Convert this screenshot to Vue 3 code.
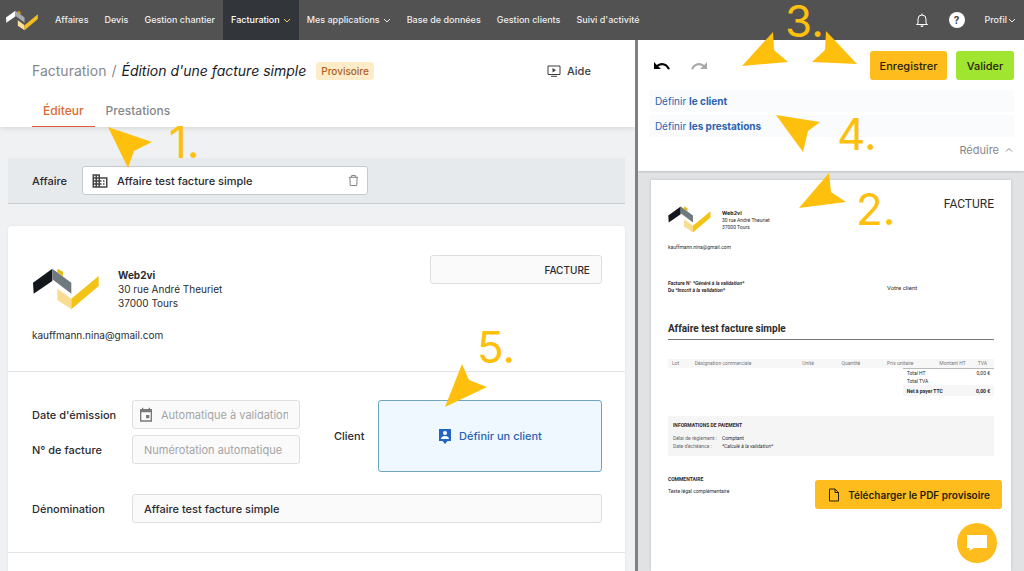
<script setup>
import { ref } from 'vue'

const menu = [
  { label: 'Affaires' },
  { label: 'Devis' },
  { label: 'Gestion chantier' },
  { label: 'Facturation', chevron: true, active: true },
  { label: 'Mes applications', chevron: true },
  { label: 'Base de données' },
  { label: 'Gestion clients' },
  { label: "Suivi d'activité" },
]

const project = ref('Affaire test facture simple')
const docType = ref('FACTURE')
const title = ref('Affaire test facture simple')

const columns = ['Lot', 'Désignation commerciale', 'Unité', 'Quantité', 'Prix unitaire', 'Montant HT', 'TVA']

const arrows = [
  '108,127 152,142 134,151 128,168',
  '742,66 773,32 774,50 788,62',
  '857,64 826,31 825,50 812,62',
  '776,115 820,122 808,131 803,152',
  '799,208 829,173 831,192 846,202',
  '445,407 462,364 469,380 487,387',
]
const steps = [
  { n: '1.', x: 169, y: 158 },
  { n: '3.', x: 785, y: 37 },
  { n: '4.', x: 837, y: 150 },
  { n: '2.', x: 856, y: 225 },
  { n: '5.', x: 477, y: 363 },
]
</script>

<template>
  <div class="app">
    <nav class="nav">
      <svg class="nav-logo" viewBox="0 0 198 126" aria-hidden="true">
        <path fill="#d9a400" d="M73 2l17 9v14L73 13z" />
        <path fill="#ffffff" d="M0 44L58 2v37L2 77z" />
        <path fill="#a7a9a8" d="M58 2l57 42v33L58 34z" />
        <path fill="#fbe0a0" d="M73 62l42 30v32L73 96z" />
        <path fill="#f5bd1f" d="M115 92l82-68v30l-82 70z" />
      </svg>
      <div class="menu">
        <a v-for="m in menu" :key="m.label" href="#" :class="{ active: m.active }">
          {{ m.label }}
          <svg v-if="m.chevron" class="chev" viewBox="0 0 8 8"><path d="M1 3l3 3 3-3" /></svg>
        </a>
      </div>
      <div class="tools">
        <button class="plain" aria-label="Notifications">
          <svg class="bell" viewBox="0 0 14 16"><path d="M3 11.500V7a4 4 0 0 1 8 0v4.500l1.500 1h-11zM7 3V1.500" /><path class="fill" d="M5.500 13.500h3a1.500 1.500 0 0 1-3 0z" /></svg>
        </button>
        <button class="help" aria-label="Aide en ligne">?</button>
        <a href="#" class="profile">Profil <svg class="chev" viewBox="0 0 8 8"><path d="M1 3l3 3 3-3" /></svg></a>
      </div>
    </nav>

    <main class="body">
      <section class="editor">
        <header class="head">
          <div class="crumbs">
            <a href="#">Facturation</a><span class="slash">/</span>
            <h1>Édition d'une facture simple</h1>
            <span class="badge">Provisoire</span>
            <a href="#" class="aide">
              <svg viewBox="0 0 14 12"><path class="line" d="M1 1h12v8.500H1zM4 11.300h6" /><path d="M5.500 3v4.500L9 5.250z" /></svg>
              Aide
            </a>
          </div>
          <div class="tabs">
            <a href="#" class="on">Éditeur</a>
            <a href="#">Prestations</a>
          </div>
        </header>

        <div class="content">
          <div class="project">
            <label for="project">Affaire</label>
            <div class="field project-field">
              <svg class="building" viewBox="0 0 24 24"><path d="M12 7V3H2v18h20V7H12zM6 19H4v-2h2v2zm0-4H4v-2h2v2zm0-4H4V9h2v2zm0-4H4V5h2v2zm4 12H8v-2h2v2zm0-4H8v-2h2v2zm0-4H8V9h2v2zm0-4H8V5h2v2zm10 12h-8v-2h2v-2h-2v-2h2v-2h-2V9h8v10zm-2-8h-2v2h2v-2zm0 4h-2v2h2v-2z" /></svg>
              <input id="project" v-model="project" type="text" />
              <button class="plain" aria-label="Supprimer l'affaire">
                <svg class="trash" viewBox="0 0 12 14"><path d="M1 3.500h10M4 3.500V1.500h4v2M2 3.500l.5 9h7l.5-9" /></svg>
              </button>
            </div>
          </div>

          <div class="card">
            <div class="issuer">
              <div class="issuer-info">
                <svg class="logo" viewBox="0 0 198 126" aria-hidden="true">
                  <path fill="#e5bd12" d="M73 2l17 9v14L73 13z" />
                  <path fill="#14171b" d="M0 44L58 2v37L2 77z" />
                  <path fill="#6e7a80" d="M58 2l57 42v33L58 34z" />
                  <path fill="#f8dc92" d="M73 62l42 30v32L73 96z" />
                  <path fill="#f3c316" d="M115 92l82-68v30l-82 70z" />
                </svg>
                <address><b>Web2vi</b><br />30 rue André Theuriet<br />37000 Tours</address>
                <p class="mail">kauffmann.nina@gmail.com</p>
              </div>
              <input v-model="docType" class="field doc-type" type="text" aria-label="Type de document" />
            </div>

            <div class="details">
              <div class="rows">
                <label for="date">Date d'émission</label>
                <div class="field soft date">
                  <svg viewBox="0 0 24 24"><path d="M17 12h-5v5h5v-5zM16 1v2H8V1H6v2H3v19h18V3h-3V1h-2zm3 19H5V8h14v12z" /></svg>
                  <input id="date" type="text" placeholder="Automatique à validation" />
                </div>
                <label for="number">N° de facture</label>
                <input id="number" class="field soft" type="text" placeholder="Numérotation automatique" />
              </div>
              <div class="client">
                <span id="client-label">Client</span>
                <button class="client-box" aria-describedby="client-label">
                  <svg viewBox="0 0 14 15"><path d="M1 0h12v12H9.500L7 15l-2.500-3H1z" /><circle cx="7" cy="4" r="2" fill="#fff" /><path fill="#fff" d="M3 10c0-4 8-4 8 0z" /></svg>
                  Définir un client
                </button>
              </div>
              <label for="title">Dénomination</label>
              <input id="title" v-model="title" class="field soft" type="text" />
            </div>
            <div class="next"></div>
          </div>
        </div>
      </section>

      <section class="preview">
        <header class="actions">
          <div class="bar">
            <button class="plain" aria-label="Annuler"><svg class="undo" viewBox="0 0 16 10"><path d="M0 1v7h7L4.300 5.500C7.500 3 12 4 14 8.500l2-.6C13.500 1.500 7 .2 2.800 4z" /></svg></button>
            <button class="plain redo" aria-label="Rétablir"><svg class="undo" viewBox="0 0 16 10"><path d="M16 1v7H9l2.700-2.500C8.500 3 4 4 2 8.500l-2-.6C2.500 1.500 9 .2 13.200 4z" /></svg></button>
            <button class="btn save">Enregistrer</button>
            <button class="btn ok">Valider</button>
          </div>
          <div class="todo">
            <a href="#">Définir <b>le client</b></a>
            <a href="#">Définir <b>les prestations</b></a>
          </div>
          <button class="plain reduce">Réduire <svg class="chev" viewBox="0 0 8 8"><path d="M1 5.500l3-3 3 3" /></svg></button>
        </header>

        <div class="stage">
          <article class="sheet">
            <div class="sheet-head">
              <svg class="sheet-logo" viewBox="0 0 198 126" aria-hidden="true">
                <path fill="#e5bd12" d="M73 2l17 9v14L73 13z" />
                <path fill="#14171b" d="M0 44L58 2v37L2 77z" />
                <path fill="#6e7a80" d="M58 2l57 42v33L58 34z" />
                <path fill="#f8dc92" d="M73 62l42 30v32L73 96z" />
                <path fill="#f3c316" d="M115 92l82-68v30l-82 70z" />
              </svg>
              <address><b>Web2vi</b><br />30 rue André Theuriet<br />37000 Tours</address>
              <strong>FACTURE</strong>
            </div>
            <p class="sheet-mail">kauffmann.nina@gmail.com</p>
            <div class="refs">
              <p>Facture N° <i>*Généré à la validation*</i><br />Du <i>*Inscrit à la validation*</i></p>
              <span>Votre client</span>
            </div>
            <h2>Affaire test facture simple</h2>
            <table class="lines">
              <thead><tr><th v-for="c in columns" :key="c">{{ c }}</th></tr></thead>
            </table>
            <table class="totals">
              <tbody>
                <tr><td>Total HT</td><td>0,00 €</td></tr>
                <tr><td>Total TVA</td><td></td></tr>
                <tr class="net"><td>Net à payer TTC</td><td>0,00 €</td></tr>
              </tbody>
            </table>
            <div class="payment">
              <h3>INFORMATIONS DE PAIEMENT</h3>
              <dl>
                <dt>Délai de règlement :</dt><dd>Comptant</dd>
                <dt>Date d'échéance :</dt><dd><i>*Calculé à la validation*</i></dd>
              </dl>
            </div>
            <h3>COMMENTAIRE</h3>
            <p class="legal">Texte légal complémentaire</p>
          </article>
        </div>

        <div class="floating">
          <button class="btn pdf">
            <svg viewBox="0 0 12 14"><path d="M1.500 1h5.500L10.500 4.500V13h-9zM7 1v3.500h3.500" /></svg>
            Télécharger le PDF provisoire
          </button>
          <button class="chat" aria-label="Discussion">
            <svg viewBox="0 0 22 18"><path d="M1 1h20v13H8l-5 3 1-3H1z" /></svg>
          </button>
        </div>
      </section>
    </main>

    <svg class="notes">
      <polygon v-for="a in arrows" :key="a" :points="a" />
      <text v-for="s in steps" :key="s.n" :x="s.x" :y="s.y">{{ s.n }}</text>
    </svg>
  </div>
</template>

<style>
body {
  margin: 0;
}
</style>

<style scoped>
* {
  box-sizing: border-box;
}
.app {
  position: relative;
  display: flex;
  flex-direction: column;
  height: 100vh;
  overflow: hidden;
  font-family: Inter, "Open Sans", sans-serif;
  font-size: 10px;
  line-height: 14px;
  color: #2b2b2e;
}
a {
  color: inherit;
  text-decoration: none;
}
button,
input {
  font: inherit;
  color: inherit;
}
button {
  cursor: pointer;
}
h1, h2, h3, p, dl, dd {
  margin: 0;
}
address {
  font-style: normal;
}
svg {
  flex: none;
}
.plain {
  display: flex;
  align-items: center;
  padding: 0;
  border: 0;
  background: none;
}
.chev {
  width: 8px;
  height: 8px;
  fill: none;
  stroke: currentColor;
}

.nav {
  display: flex;
  flex: none;
  height: 40px;
  padding: 0 8px 0 6px;
  align-items: center;
  background: #525252;
  color: #ececec;
  font-size: 9px;
  font-weight: 500;
}
.nav-logo {
  width: 32px;
  height: 21px;
}
.menu {
  display: flex;
  align-self: stretch;
  margin-left: 9px;
}
.menu a {
  display: flex;
  align-items: center;
  gap: 3px;
  padding: 0 8px;
}
.menu .active {
  background: #323539;
  color: #fff;
}
.active .chev {
  color: #f0d050;
}
.tools {
  display: flex;
  align-items: center;
  gap: 20px;
  margin-left: auto;
}
.bell {
  width: 14px;
  height: 16px;
  fill: none;
  stroke: #fff;
}
.bell .fill {
  fill: #fff;
  stroke: none;
}
.help {
  width: 16px;
  height: 16px;
  padding: 0;
  border: 0;
  border-radius: 50%;
  background: #fff;
  color: #444;
  font-size: 10px;
  font-weight: 700;
}
.profile {
  display: flex;
  align-items: center;
  gap: 1px;
}

.body {
  display: grid;
  flex: 1;
  min-height: 0;
  grid-template-columns: minmax(0, 1fr) 38%;
}
.editor {
  display: flex;
  flex-direction: column;
  overflow: hidden;
  background: #eff1f3;
}
.head {
  flex: none;
  padding: 19px 44px 0 32px;
  background: #fff;
  box-shadow: 0 1px 6px rgba(0, 0, 0, 0.12);
}
.crumbs {
  display: flex;
  align-items: center;
  height: 23px;
  font-size: 14px;
  color: #85888b;
}
.slash {
  margin: 0 5px;
}
h1 {
  font-size: 14px;
  font-weight: 400;
  font-style: italic;
  color: #1c1c1e;
}
.badge {
  margin-left: 10px;
  padding: 1px 5px;
  border-radius: 3px;
  background: #feecc9;
  color: #aa6426;
  font-size: 10px;
  line-height: 16px;
  font-weight: 500;
}
.aide {
  display: flex;
  align-items: center;
  gap: 6px;
  margin-left: auto;
  font-size: 11px;
  font-weight: 500;
  color: #3c3c40;
}
.aide svg {
  width: 14px;
  height: 12px;
  fill: #3c3c40;
}
.aide .line {
  fill: none;
  stroke: #3c3c40;
}
.tabs {
  display: flex;
  margin-top: 14px;
  font-size: 12px;
  font-weight: 500;
  line-height: 30px;
  color: #85888b;
}
.tabs a {
  padding: 0 11px;
  border-bottom: 1px solid transparent;
}
.tabs .on {
  border-color: #e05a3c;
  color: #dc6a2f;
}
.content {
  flex: 1;
  padding: 31px 10px 0 8px;
}
.project {
  display: flex;
  align-items: center;
  height: 46px;
  padding: 0 24px;
  border-bottom: 1px solid #c9ccd0;
  background: #e7eaed;
}
label,
.client {
  font-size: 11px;
  font-weight: 500;
}
.project label {
  width: 50px;
}
.field {
  min-width: 0;
  height: 29px;
  border: 1px solid #dcdee0;
  border-radius: 3px;
  background: #fafafb;
  font-size: 11px;
  font-weight: 500;
}
.field input {
  flex: 1;
  min-width: 0;
  padding: 0;
  border: 0;
  background: none;
  outline: 0;
}
.project-field {
  display: flex;
  align-items: center;
  width: 286px;
  padding: 0 8px;
  gap: 8px;
  border-color: #c6c9d2;
  background: #fff;
}
.building {
  width: 18px;
  height: 18px;
  fill: #444;
}
.trash {
  width: 11px;
  height: 13px;
  fill: none;
  stroke: #777;
}
.card {
  margin-top: 22px;
  border-radius: 4px 4px 0 0;
  background: #fff;
  box-shadow: 0 0 3px rgba(0, 0, 0, 0.06);
}
.issuer {
  display: flex;
  justify-content: space-between;
  align-items: flex-start;
  height: 146px;
  padding: 29px 23px 0 24px;
  border-bottom: 1px solid #e2e3e5;
}
.issuer-info {
  display: grid;
  grid-template-columns: 86px auto;
  padding-top: 13px;
}
.logo {
  width: 66px;
  height: 42px;
  margin-left: 1px;
}
.mail {
  grid-column: 1 / 3;
  margin-top: 18px;
}
.doc-type {
  width: 172px;
  padding: 0 11px;
  font-size: 10px;
  text-align: right;
}
.details {
  display: grid;
  grid-template-columns: 100px minmax(0, 168px) 1fr;
  row-gap: 22px;
  align-items: center;
  height: 181px;
  padding: 28px 23px 0 24px;
  align-content: start;
  border-bottom: 1px solid #e2e3e5;
}
.rows {
  display: grid;
  grid-column: 1 / 3;
  grid-template-columns: 100px 1fr;
  gap: 6px 0;
  align-items: center;
  align-self: start;
}
.soft {
  padding: 0 11px;
}
.details > .soft {
  grid-column: 2 / 4;
}
.date {
  display: flex;
  align-items: center;
  gap: 7px;
  padding-left: 5px;
}
.date svg {
  width: 16px;
  height: 16px;
  fill: #77797b;
}
::placeholder {
  color: #a3a4a6;
  opacity: 1;
  font-weight: 400;
}
.client {
  display: flex;
  align-items: center;
  padding-left: 34px;
}
.client span {
  width: 44px;
}
.client-box {
  display: flex;
  flex: 1;
  align-items: center;
  justify-content: center;
  gap: 7px;
  height: 72px;
  border: 1px solid #6fa5c4;
  border-radius: 3px;
  background: #f0f8ff;
  color: #2863b5;
}
.client-box svg {
  width: 14px;
  height: 15px;
  fill: #2065c4;
}
.next {
  height: 60px;
}

.preview {
  position: relative;
  display: flex;
  flex-direction: column;
  overflow: hidden;
  border-left: 3px solid #7e8284;
  background: #e0e2e4;
}
.actions {
  flex: none;
  height: 131px;
  padding: 11px 10px 0 11px;
  background: #fff;
  box-shadow: 0 1px 2px rgba(0, 0, 0, 0.16);
}
.bar {
  display: flex;
  align-items: center;
  padding-left: 5px;
}
.undo {
  width: 16px;
  height: 10px;
}
.redo {
  margin-left: 21px;
  fill: #a8a8a8;
}
.btn {
  height: 29px;
  border: 0;
  border-radius: 3px;
  background: #febd1c;
  color: #29210f;
  font-size: 11px;
  font-weight: 500;
}
.save {
  width: 77px;
  padding: 0;
  margin-left: auto;
}
.ok {
  width: 58px;
  padding: 0;
  margin-left: 9px;
  background: #a0e52f;
}
.todo {
  display: grid;
  gap: 3px;
  margin-top: 10px;
}
.todo a {
  padding-left: 6px;
  background: #f9fbfd;
  color: #2c62b0;
  line-height: 22px;
}
.todo b {
  font-weight: 700;
}
.reduce {
  gap: 6px;
  margin: 6px 1px 0 auto;
  color: #85888b;
  font-size: 11px;
}
.stage {
  flex: 1;
  min-height: 0;
  padding: 9px 13px 0;
}
.sheet {
  height: 100%;
  padding: 17px;
  background: #fff;
  box-shadow: 0 0 3px rgba(0, 0, 0, 0.15);
  font-family: Roboto, sans-serif;
  font-size: 5px;
  line-height: 7px;
}
.sheet-head {
  display: flex;
}
.sheet-logo {
  width: 43px;
  height: 27px;
  margin: 9px 11px 0 0;
}
.sheet-head address {
  padding-top: 12px;
}
.sheet-head b {
  font-size: 6px;
}
.sheet-head strong {
  margin-left: auto;
  font-size: 12px;
  line-height: 14px;
  font-weight: 400;
}
.sheet-mail {
  margin-top: 11px;
}
.refs {
  display: flex;
  margin-top: 29px;
  font-weight: 700;
}
.refs span {
  align-self: center;
  margin-left: auto;
  width: 107px;
  font-size: 6px;
  font-weight: 400;
}
h2 {
  margin-top: 28px;
  padding-bottom: 3px;
  border-bottom: 1px solid #777;
  font-size: 10px;
  line-height: 14px;
  font-weight: 700;
}
table {
  border-collapse: collapse;
}
.lines {
  width: 100%;
  margin-top: 19px;
  table-layout: fixed;
  background: #f7f7f7;
  color: #77797c;
}
th {
  padding: 1px 0 1px 4px;
  font-weight: 400;
  text-align: left;
  white-space: nowrap;
}
th:nth-child(1) { width: 7%; }
th:nth-child(2) { width: 33%; }
th:nth-child(3) { width: 12%; }
th:nth-child(4) { width: 14%; }
th:nth-child(5) { width: 16%; }
th:nth-child(6) { width: 13%; }
th:nth-child(7) { width: 5%; padding-left: 0; }
.totals {
  width: 28%;
  margin-left: auto;
  border-top: 1px solid #bbb;
}
td {
  height: 8px;
  padding: 1px 4px 0;
}
td + td {
  text-align: right;
}
.net {
  background: #f6f6f6;
  font-weight: 700;
}
.net td {
  height: 11px;
}
.payment {
  height: 40px;
  margin-top: 20px;
  padding: 5px;
  background: #f5f5f6;
}
h3 {
  font-size: 5px;
  line-height: 8px;
  font-weight: 700;
}
dl {
  display: grid;
  grid-template-columns: 49px 1fr;
  margin-top: 5px;
  line-height: 8px;
}
dt {
  color: #666;
}
.payment + h3 {
  margin-top: 19px;
}
.legal {
  margin-top: 5px;
}
.floating {
  position: absolute;
  right: 22px;
  bottom: 8px;
  display: flex;
  flex-direction: column;
  align-items: flex-end;
  gap: 14px;
}
.pdf {
  display: flex;
  align-items: center;
  gap: 8px;
  padding: 0 12px 0 13px;
  font-size: 10px;
  font-weight: 600;
}
.pdf svg {
  width: 12px;
  height: 14px;
  fill: none;
  stroke: #29210f;
}
.chat {
  display: grid;
  place-items: center;
  width: 40px;
  height: 40px;
  margin-right: 5px;
  padding: 0;
  border: 0;
  border-radius: 50%;
  background: #febd1c;
}
.chat svg {
  width: 22px;
  height: 18px;
  fill: #fff;
}

.notes {
  position: absolute;
  inset: 0;
  width: 100%;
  height: 100%;
  pointer-events: none;
  fill: #fec00d;
  font-size: 44px;
}
</style>
